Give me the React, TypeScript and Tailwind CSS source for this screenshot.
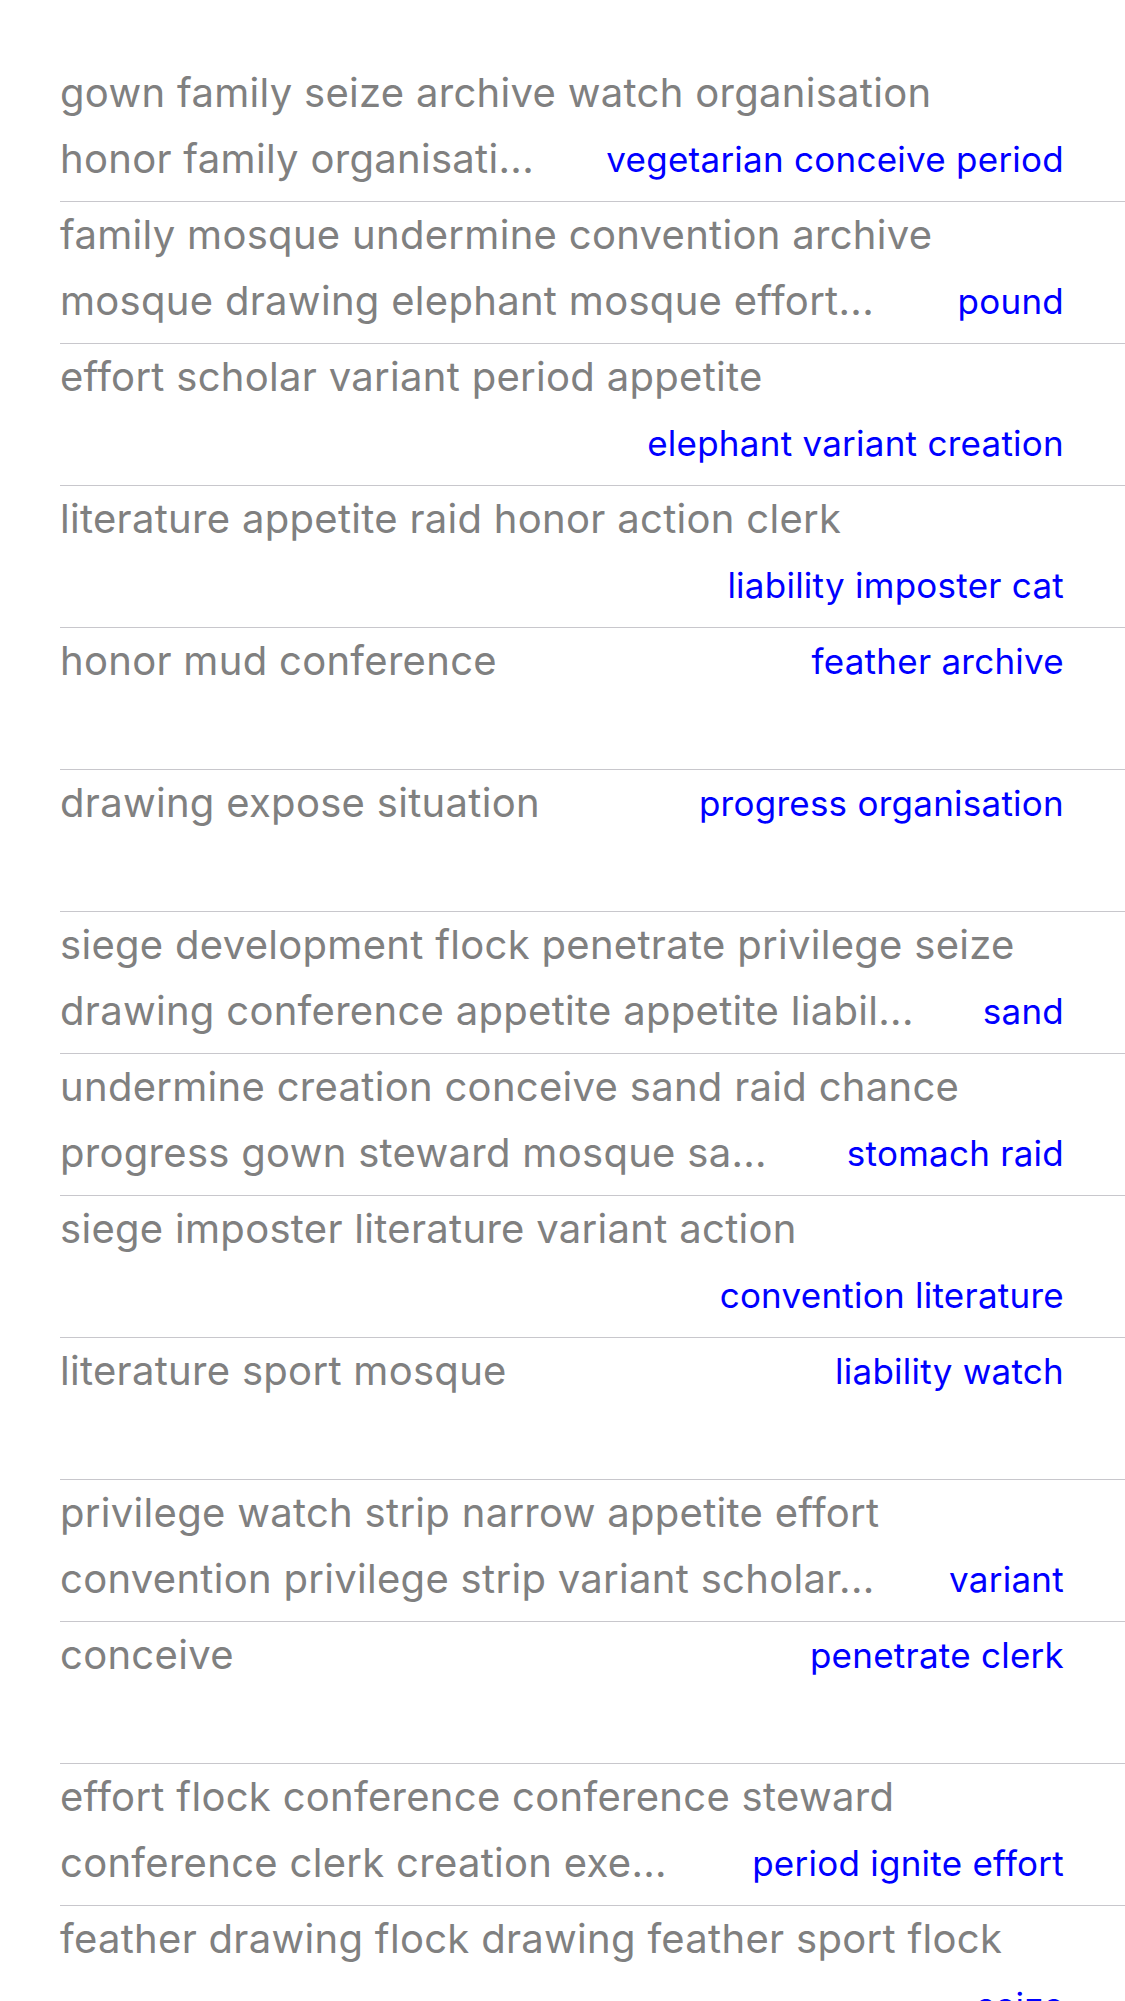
import React from "react";

type Item = {
  first: string;
  second?: string;
  detail: string;
  // which line the blue detail sits on
  detailLine: 1 | 2;
};

const ITEMS: Item[] = [
  {
    first: "gown family seize archive watch organisation",
    second: "honor family organisati...",
    detail: "vegetarian conceive period",
    detailLine: 2,
  },
  {
    first: "family mosque undermine convention archive",
    second: "mosque drawing elephant mosque effort...",
    detail: "pound",
    detailLine: 2,
  },
  {
    first: "effort scholar variant period appetite",
    detail: "elephant variant creation",
    detailLine: 2,
  },
  {
    first: "literature appetite raid honor action clerk",
    detail: "liability imposter cat",
    detailLine: 2,
  },
  { first: "honor mud conference", detail: "feather archive", detailLine: 1 },
  { first: "drawing expose situation", detail: "progress organisation", detailLine: 1 },
  {
    first: "siege development flock penetrate privilege seize",
    second: "drawing conference appetite appetite liabil...",
    detail: "sand",
    detailLine: 2,
  },
  {
    first: "undermine creation conceive sand raid chance",
    second: "progress gown steward mosque sa...",
    detail: "stomach raid",
    detailLine: 2,
  },
  {
    first: "siege imposter literature variant action",
    detail: "convention literature",
    detailLine: 2,
  },
  { first: "literature sport mosque", detail: "liability watch", detailLine: 1 },
  {
    first: "privilege watch strip narrow appetite effort",
    second: "convention privilege strip variant scholar...",
    detail: "variant",
    detailLine: 2,
  },
  { first: "conceive", detail: "penetrate clerk", detailLine: 1 },
  {
    first: "effort flock conference conference steward",
    second: "conference clerk creation exe...",
    detail: "period ignite effort",
    detailLine: 2,
  },
  {
    first: "feather drawing flock drawing feather sport flock",
    detail: "seize",
    detailLine: 2,
  },
];

function Line({ text, detail }: { text?: string; detail?: string }) {
  return (
    <div className="flex h-[66px] justify-between gap-6 pr-[61px] leading-[66px]">
      <span className="whitespace-nowrap text-[40px] tracking-[0.3px] text-[#808080]">
        {text}
      </span>
      {detail && (
        <span className="whitespace-nowrap text-[35px] tracking-[0.25px] text-[#0000ff]">
          {detail}
        </span>
      )}
    </div>
  );
}

function Row({ item }: { item: Item }) {
  return (
    <li className="border-b border-[#c8c7cc] pb-[9px]">
      <Line text={item.first} detail={item.detailLine === 1 ? item.detail : undefined} />
      <Line text={item.second} detail={item.detailLine === 2 ? item.detail : undefined} />
    </li>
  );
}

export default function App() {
  return (
    <div
      className="min-h-screen overflow-hidden bg-white pt-[60px]"
      style={{ fontFamily: "Inter, 'Noto Sans', sans-serif" }}
    >
      <ul className="ml-[60px]">
        {ITEMS.map((item, i) => (
          <Row key={i} item={item} />
        ))}
      </ul>
    </div>
  );
}
